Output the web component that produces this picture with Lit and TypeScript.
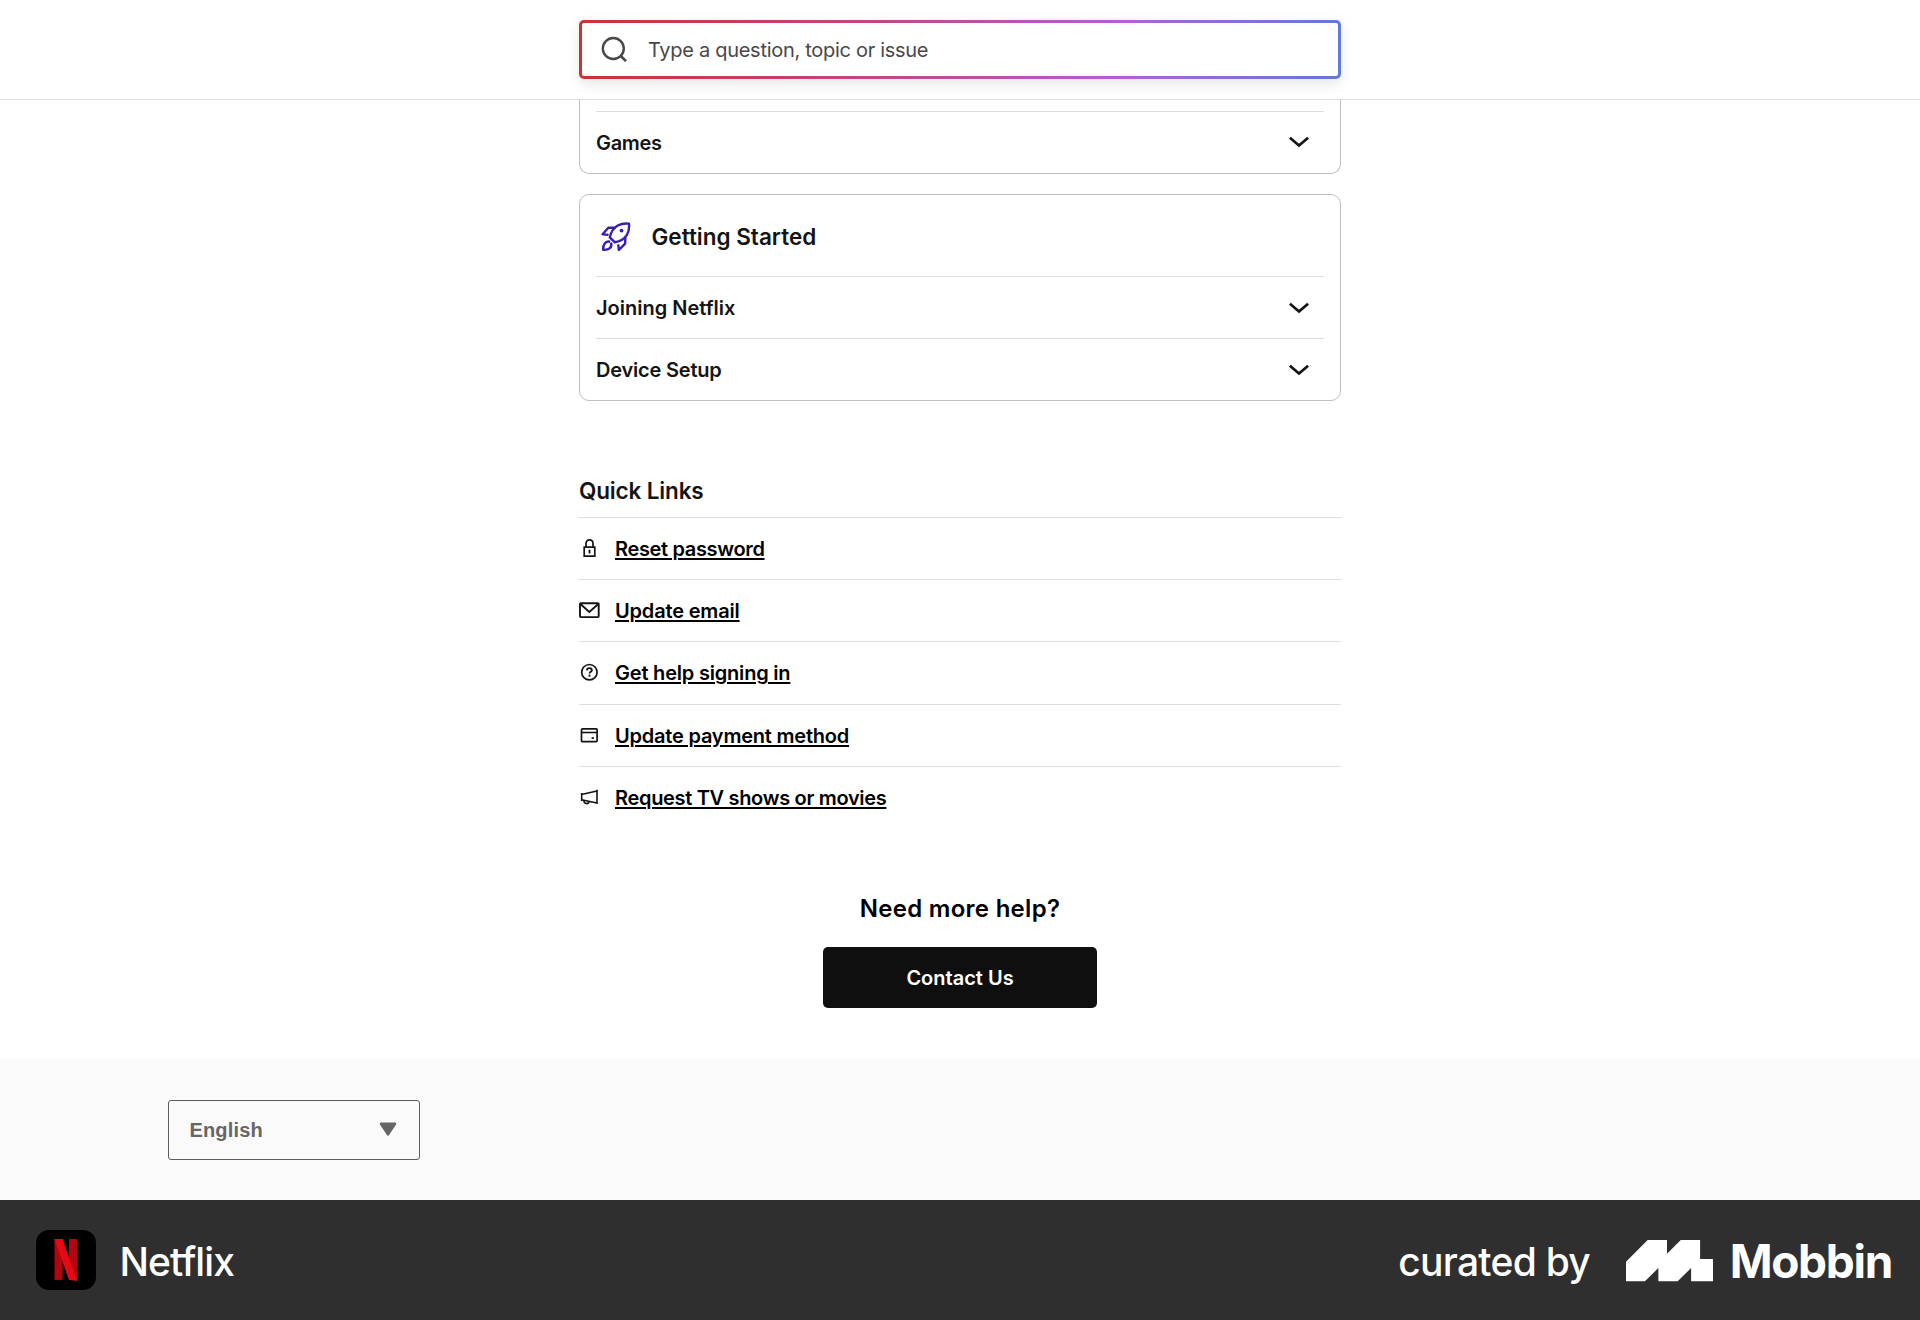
import { LitElement, html, css, svg, TemplateResult } from "lit";
import { customElement } from "lit/decorators.js";
import { styleMap } from "lit/directives/style-map.js";

interface Item {
  label: string;
  spacing: number;
  icon?: TemplateResult;
}

const icon = (body: TemplateResult, size = 24, px = 24) =>
  html`<svg width=${px} height=${px} viewBox="0 0 ${size} ${size}" fill="none" aria-hidden="true">${body}</svg>`;

const chevron = html`<svg class="chevron" width="20" height="12" viewBox="0 0 20 12" fill="none">
  <path d="M0.9 1.7 L10 9.5 L19.1 1.7" stroke="#141414" stroke-width="2.7" />
</svg>`;

const searchIcon = icon(
  svg`<circle cx="12.3" cy="12.5" r="10.5" stroke="#484848" stroke-width="2.4"/>
      <path d="M19.8 20 L25 25.2" stroke="#484848" stroke-width="2.6"/>`,
  26,
  26
);

const rocketIcon = html`<svg width="30" height="30" viewBox="0 0 30 30" fill="none" stroke="#3a1eae" stroke-width="2.4" stroke-linejoin="round">
  <path d="M14 20.3 L8.8 15.4 C9.9 10.2 12.8 5.6 17.2 3.3 C20.5 1.5 24.5 1.2 28 1.6 C28.4 5.6 27.9 9.7 25.9 12.9 C23.4 17 18.6 19.5 14 20.3 Z" />
  <path d="M14.6 5.7 L7.3 5.7 L1.6 12.2 L7.6 12.9" />
  <path d="M24.4 15.4 L24.1 21.6 L17.9 28 L17.2 22.4" />
  <path d="M9.2 19.7 C4.6 18.9 2 21.8 2.1 27.8 C8.2 28.2 11.6 25.3 10 20.6" />
  <circle cx="20.5" cy="8.6" r="1.9" fill="#3a1eae" stroke="none" />
</svg>`;

const lockIcon = icon(
  svg`<path d="M5.2 9.2 H15.8 V18.1 H5.2 Z M7 9 V5.6 C7 3.3 8.5 1.9 10.5 1.9 C12.5 1.9 14 3.3 14 5.6 V9" stroke="#141414" stroke-width="1.7"/>
      <path d="M10.5 11.6 V15.5" stroke="#141414" stroke-width="1.9"/>`,
  21,
  21
);
const mailIcon = icon(
  svg`<rect x="1" y="3.3" width="18.7" height="13.8" rx="0.8" stroke="#141414" stroke-width="1.9"/>
      <path d="M1.4 4 L10.3 12 L19.3 4" stroke="#141414" stroke-width="1.9"/>`,
  21,
  21
);
const helpIcon = icon(
  svg`<circle cx="10.4" cy="10.2" r="7.7" stroke="#141414" stroke-width="1.7"/>
      <path d="M7.9 8.4 C8 6.9 9 6.2 10.4 6.2 C11.9 6.2 12.9 7 12.9 8.2 C12.9 9.8 10.5 9.8 10.5 11.6" stroke="#141414" stroke-width="1.8"/>
      <circle cx="10.5" cy="13.7" r="1.1" fill="#141414"/>`,
  21,
  21
);
const cardIcon = icon(
  svg`<rect x="2.5" y="3.9" width="15.6" height="12.8" rx="0.9" stroke="#141414" stroke-width="1.7"/>
      <path d="M2.5 7.5 H18.1" stroke="#141414" stroke-width="1.6"/>
      <path d="M12.6 13 H14.9" stroke="#141414" stroke-width="1.8"/>`,
  21,
  21
);
const megaphoneIcon = icon(
  svg`<path d="M2.7 6.1 V13.9 M2.5 7.5 L18 3.9 V16.1 L2.5 12.7 M18 2.7 V17.1" stroke="#141414" stroke-width="1.6"/>
      <path d="M4.8 13.3 C4.9 15.5 5.9 16.6 7.5 16.6 C9 16.6 9.9 15.7 10.3 14.3" stroke="#141414" stroke-width="1.6"/>`,
  21,
  21
);

const gettingStarted: Item[] = [
  { label: "Joining Netflix", spacing: 0 },
  { label: "Device Setup", spacing: -0.2 },
];

const quickLinks: Item[] = [
  { label: "Reset password", spacing: -0.34, icon: lockIcon },
  { label: "Update email", spacing: -0.17, icon: mailIcon },
  { label: "Get help signing in", spacing: -0.2, icon: helpIcon },
  { label: "Update payment method", spacing: -0.21, icon: cardIcon },
  { label: "Request TV shows or movies", spacing: -0.32, icon: megaphoneIcon },
];

@customElement("app-root")
export class AppRoot extends LitElement {
  static styles = css`
    :host {
      display: flex;
      flex-direction: column;
      height: 1320px;
      background: #fff;
      font-family: Inter, "Liberation Sans", sans-serif;
      font-size: 20px;
      color: #141414;
      overflow: hidden;
    }
    * {
      box-sizing: border-box;
    }
    svg {
      display: block;
      flex: none;
    }
    h2,
    h3 {
      margin: 0;
      font-weight: 600;
    }
    .header {
      flex: none;
      height: 100px;
      padding-top: 20px;
      border-bottom: 1px solid #dedede;
    }
    .column {
      width: 762px;
      margin: 0 auto;
    }
    .search {
      display: flex;
      align-items: center;
      gap: 21px;
      height: 59px;
      padding: 0 19px;
      border: 3px solid transparent;
      border-radius: 5px;
      background:
        linear-gradient(#fff, #fff) padding-box,
        linear-gradient(90deg, #cb342d 0%, #bd4b96 45%, #b061d4 72%, #607adf 100%) border-box;
      box-shadow: 0 5px 14px rgba(0, 0, 0, 0.1);
      color: #484848;
      letter-spacing: -0.29px;
    }
    .search svg {
      margin-top: -1px;
    }
    .search span {
      padding-top: 1px;
    }
    .main {
      flex: none;
      height: 959px;
    }
    .card {
      border: 1px solid #c0c0c0;
      border-radius: 10px;
      padding: 0 16px;
    }
    .card.cut {
      height: 74px;
      padding-top: 10.6px;
      border-top: 0;
      border-radius: 0 0 10px 10px;
      margin-bottom: 20px;
    }
    .card-head {
      display: flex;
      align-items: center;
      gap: 21px;
      height: 81px;
      padding: 2px 0 0 5px;
    }
    .card-head svg {
      margin-left: -0.5px;
    }
    .card-head h3 {
      font-size: 22.5px;
      letter-spacing: 0;
    }
    .row {
      display: flex;
      align-items: center;
      justify-content: space-between;
      height: 62px;
      padding: 0 15px 0 0;
      border-top: 1px solid #dedede;
      font-weight: 600;
    }
    .games {
      padding-top: 2px;
      letter-spacing: -0.35px;
    }
    .quick-title {
      padding: 76px 0 12px;
      font-size: 22.5px;
      line-height: 28px;
      letter-spacing: -0.15px;
    }
    .link {
      display: flex;
      align-items: center;
      gap: 15px;
      height: 62.2px;
      border-top: 1px solid #dedede;
    }
    .link a {
      padding-top: 1px;
      color: #000;
      font-weight: 600;
      text-decoration: underline 2px;
      text-underline-offset: 2px;
    }
    .more {
      display: flex;
      flex-direction: column;
      align-items: center;
      gap: 23px;
      padding-top: 65.6px;
    }
    .more h2 {
      font-size: 24px;
      line-height: 30px;
      letter-spacing: 0.28px;
      color: #000;
    }
    .contact {
      width: 274px;
      height: 61px;
      border: 0;
      border-radius: 5px;
      background: #0f0f0f;
      color: #fff;
      font: 600 20px Inter, sans-serif;
      padding: 1px 0 0;
    }
    .language {
      flex: none;
      height: 141px;
      padding: 41px 168px 0;
      background: #fafafa;
    }
    .select {
      display: flex;
      align-items: center;
      justify-content: space-between;
      width: 252px;
      height: 60px;
      padding: 0 22.5px 1px 20.5px;
      border: 1px solid #5c5c5c;
      border-radius: 3px;
      color: #666;
      font: bold 20px "Liberation Sans", Arial, sans-serif;
      letter-spacing: 0.15px;
    }
    .select span {
      padding-top: 1px;
    }
    .bar {
      flex: none;
      display: flex;
      align-items: center;
      height: 120px;
      padding: 0 28px 0 36px;
      background: #2f2f2f;
      color: #fff;
      font-size: 39px;
      font-weight: 550;
    }
    .app-name {
      padding: 3px 0 0 23.5px;
      letter-spacing: -0.9px;
    }
    .curated {
      margin-left: auto;
      padding: 3px 36px 0 0;
      letter-spacing: -0.75px;
    }
    .brand {
      padding: 1px 0 0 16.5px;
      font-size: 46px;
      font-weight: 700;
      letter-spacing: -1.3px;
    }
    .mark {
      margin-top: 2px;
    }
  `;

  private row(item: Item) {
    return html`<div class="row">
      <span style=${styleMap({ letterSpacing: `${item.spacing}px` })}>${item.label}</span>${chevron}
    </div>`;
  }

  private link(item: Item) {
    return html`<div class="link">
      ${item.icon}<a style=${styleMap({ letterSpacing: `${item.spacing}px` })}>${item.label}</a>
    </div>`;
  }

  render() {
    return html`
      <header class="header">
        <div class="column search">${searchIcon}<span>Type a question, topic or issue</span></div>
      </header>
      <main class="main">
        <div class="column">
          <section class="card cut">
            <div class="row"><span class="games">Games</span>${chevron}</div>
          </section>
          <section class="card">
            <div class="card-head">${rocketIcon}<h3>Getting Started</h3></div>
            ${gettingStarted.map((i) => this.row(i))}
          </section>
          <h3 class="quick-title">Quick Links</h3>
          ${quickLinks.map((i) => this.link(i))}
          <section class="more">
            <h2>Need more help?</h2>
            <button class="contact">Contact Us</button>
          </section>
        </div>
      </main>
      <section class="language">
        <div class="select">
          <span>English</span>
          <svg width="18" height="15" viewBox="0 0 18 15">
            <path d="M2 1.8 H16 L9 12.4 Z" fill="#666" stroke="#666" stroke-width="2.6" stroke-linejoin="round" />
          </svg>
        </div>
      </section>
      <footer class="bar">
        <svg width="60" height="60" viewBox="0 0 60 60">
          <rect width="60" height="60" rx="13" fill="#000" />
          <path d="M18.5 9 H26.5 V49.8 L18.5 50.3 Z M33 9 H41.3 V50.5 L33 49.6 Z" fill="#b1060f" />
          <path d="M18.5 9 H26.5 L41.3 51 L32.9 49.8 Z" fill="#e50914" />
        </svg>
        <span class="app-name">Netflix</span>
        <span class="curated">curated by</span>
        <svg class="mark" width="87.2" height="41.4" viewBox="0 0 253 120">
          <path d="M0 63 L63 0 H119 V40 L159 0 H215 V55 H253 V120 H189 V81 L150 120 H94 V81 L55 120 H0 Z" fill="#fff" />
        </svg>
        <span class="brand">Mobbin</span>
      </footer>
    `;
  }
}
